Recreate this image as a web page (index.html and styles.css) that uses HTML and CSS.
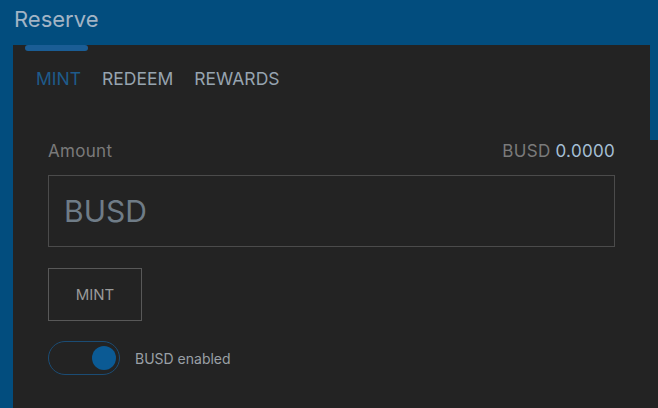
FILE: index.html
```html
<!DOCTYPE html>
<html>
<head>
<meta charset="utf-8">
<link rel="stylesheet" href="styles.css">
</head>
<body>
<header class="title">Reserve</header>
<main class="card">
  <span class="tab-indicator"></span>
  <nav class="tabs">
    <span class="tab active">MINT</span>
    <span class="tab">REDEEM</span>
    <span class="tab">REWARDS</span>
  </nav>
  <section class="content">
    <div class="amount-row">
      <span class="label">Amount</span>
      <span class="balance">BUSD <span class="balance-value">0.0000</span></span>
    </div>
    <div class="input-box"><span class="placeholder">BUSD</span></div>
    <button class="mint-btn">MINT</button>
    <div class="toggle-row">
      <span class="toggle"><span class="knob"></span></span>
      <span class="toggle-label">BUSD enabled</span>
    </div>
  </section>
</main>
</body>
</html>
```
FILE: styles.css
```css
html, body {
  margin: 0;
  height: 100%;
}
body {
  font-family: Inter, Lato, sans-serif;
  background:
    linear-gradient(#232323, #232323) right 0 top 140px / 8px 100% no-repeat,
    #024d7e;
  overflow: hidden;
}
.title {
  height: 45px;
  box-sizing: border-box;
  padding: 6px 0 0 14px;
  font-size: 22px;
  line-height: 26px;
  color: #a2b4c5;
}
.card {
  position: relative;
  margin-left: 13px;
  width: 637px;
  height: 363px;
  background: #232323;
}
.tab-indicator {
  position: absolute;
  left: 12px;
  top: 0;
  width: 63px;
  height: 6px;
  border-radius: 3px;
  background: #1a5d95;
}
.tabs {
  display: flex;
  gap: 21px;
  padding: 23px 0 0 23px;
  font-size: 17.5px;
  line-height: 22px;
  color: #97a4b0;
}
.tab.active {
  color: #1e5b8b;
}
.content {
  padding: 0 35px;
}
.amount-row {
  display: flex;
  justify-content: space-between;
  margin-top: 50px;
  font-size: 17px;
  letter-spacing: 0.3px;
  line-height: 22px;
  color: #7a7a7a;
}
.balance-value {
  color: #a5bfd5;
}
.input-box {
  margin-top: 13px;
  height: 72px;
  box-sizing: border-box;
  border: 1px solid #4b4b4b;
  display: flex;
  align-items: center;
  padding-left: 15px;
}
.placeholder {
  font-size: 30px;
  color: #6f7c87;
}
.mint-btn {
  display: block;
  margin-top: 21px;
  width: 94px;
  height: 53px;
  background: transparent;
  border: 1px solid #585858;
  color: #9a9a9a;
  font-family: inherit;
  font-size: 15px;
  padding: 0;
}
.toggle-row {
  display: flex;
  align-items: center;
  gap: 15px;
  margin-top: 20px;
}
.toggle {
  width: 72px;
  height: 34px;
  box-sizing: border-box;
  border: 1px solid #1b4c74;
  border-radius: 17px;
  display: flex;
  align-items: center;
  justify-content: flex-end;
  padding-right: 3px;
}
.knob {
  width: 24px;
  height: 24px;
  border-radius: 50%;
  background: #0b5a94;
}
.toggle-label {
  font-size: 14px;
  color: #9aa0a6;
}
```
